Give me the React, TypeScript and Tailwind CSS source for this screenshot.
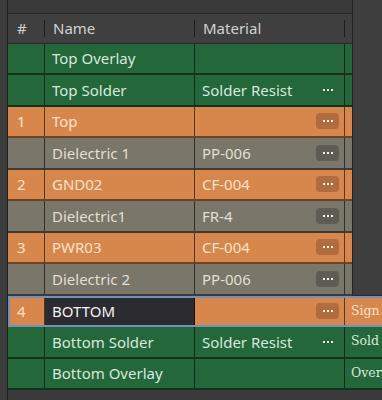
import React from 'react'

type Kind = 'green' | 'orange' | 'gray'

interface Layer {
  num: string
  name: string
  material: string
  kind: Kind
  button: boolean
  type: string
  selected?: boolean
}

// type column is only visible for the rows below the side panel
const layers: Layer[] = [
  { num: '', name: 'Top Overlay', material: '', kind: 'green', button: false, type: '' },
  { num: '', name: 'Top Solder', material: 'Solder Resist', kind: 'green', button: true, type: '' },
  { num: '1', name: 'Top', material: '', kind: 'orange', button: true, type: '' },
  { num: '', name: 'Dielectric 1', material: 'PP-006', kind: 'gray', button: true, type: '' },
  { num: '2', name: 'GND02', material: 'CF-004', kind: 'orange', button: true, type: '' },
  { num: '', name: 'Dielectric1', material: 'FR-4', kind: 'gray', button: true, type: '' },
  { num: '3', name: 'PWR03', material: 'CF-004', kind: 'orange', button: true, type: '' },
  { num: '', name: 'Dielectric 2', material: 'PP-006', kind: 'gray', button: true, type: '' },
  { num: '4', name: 'BOTTOM', material: '', kind: 'orange', button: true, type: 'Sign', selected: true },
  { num: '', name: 'Bottom Solder', material: 'Solder Resist', kind: 'green', button: true, type: 'Sold' },
  { num: '', name: 'Bottom Overlay', material: '', kind: 'green', button: false, type: 'Over' },
]

const rowBg: Record<Kind, string> = {
  green: 'bg-[#23673a] text-[#d9e8dd]',
  orange: 'bg-[#d8874c] text-[#fbe2cb]',
  gray: 'bg-[#7a7669] text-[#e2dfd6]',
}

const btnBg: Record<Kind, string> = {
  green: 'bg-transparent',
  orange: 'bg-[#b06c41]',
  gray: 'bg-[#5f5c54]',
}

const Dots = ({ kind }: { kind: Kind }) => (
  <div className={`w-[23px] h-[16px] rounded-[4px] flex items-center justify-center gap-[2px] ${btnBg[kind]}`}>
    <span className="w-[2px] h-[2px] bg-[#f2f2f2]" />
    <span className="w-[2px] h-[2px] bg-[#f2f2f2]" />
    <span className="w-[2px] h-[2px] bg-[#f2f2f2]" />
  </div>
)

const Row = ({ layer }: { layer: Layer }) => {
  const sel = layer.selected
  return (
    <div
      className={`flex h-[31.5px] shrink-0 ${rowBg[layer.kind]} ${
        sel ? 'border-y-2 border-l-2 border-[#7392bb]' : 'border-b-2 border-black/50'
      }`}
    >
      <div className={`${sel ? 'w-[35px] pl-[7px]' : 'w-[37px] pl-[9px]'} shrink-0 flex items-center border-r border-black/60`}>
        {layer.num}
      </div>
      <div
        className={`w-[150px] shrink-0 flex items-center pl-[7px] border-r border-black/60 ${
          sel ? 'bg-[#2c2b30] text-[#f3f3f3]' : ''
        }`}
      >
        {layer.name}
      </div>
      <div className="w-[150px] shrink-0 flex items-center justify-between pl-[7px] pr-[5px] border-r border-black/60">
        <span>{layer.material}</span>
        {layer.button && <Dots kind={layer.kind} />}
      </div>
      <div className="flex-1 flex items-center pl-[6px] whitespace-nowrap text-[12.5px] font-['DejaVu_Serif',serif]">
        {layer.type}
      </div>
    </div>
  )
}

export default function App() {
  return (
    <div className="w-[382px] h-[400px] relative overflow-hidden bg-[#3a3a3a] flex font-['Noto_Sans',sans-serif] text-[15px]">
      {/* left gutter */}
      <div className="w-[8px] shrink-0 bg-[#3c3c3c] border-r border-[#1f1f1f]" />

      <div className="flex-1 flex flex-col min-w-0">
        <div className="h-[13.5px] shrink-0 bg-[#3a3a3a] border-b border-[#2a2a2a]" />
        {/* header */}
        <div className="h-[30px] shrink-0 flex bg-[#3f3f3f] text-[#d2d2d2] border-b border-[#2b2b2b]">
          <div className="w-[37px] shrink-0 flex items-center pl-[9px] relative">
            #
            <span className="absolute right-0 top-[6px] h-[17px] w-[1px] bg-[#1e1e1e]" />
          </div>
          <div className="w-[150px] shrink-0 flex items-center pl-[8px] relative">
            Name
            <span className="absolute right-0 top-[6px] h-[17px] w-[1px] bg-[#1e1e1e]" />
          </div>
          <div className="w-[150px] shrink-0 flex items-center pl-[8px] relative">
            Material
            <span className="absolute right-0 top-[6px] h-[17px] w-[1px] bg-[#1e1e1e]" />
          </div>
          <div className="flex-1" />
        </div>

        {layers.map((l) => (
          <Row key={l.name} layer={l} />
        ))}
      </div>

      {/* side panel covering the wide column */}
      <div className="absolute left-[352px] top-0 w-[30px] h-[296px] bg-[#3e3e3e] border-l border-[#242424] border-b border-b-[#2a2a2a]" />
    </div>
  )
}
